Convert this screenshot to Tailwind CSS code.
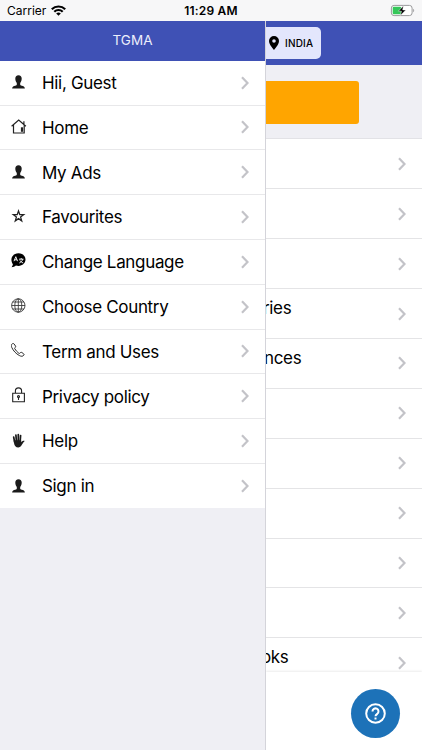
<!DOCTYPE html>
<html lang="en">
<head>
    <meta charset="UTF-8">
    <meta name="viewport" content="width=device-width, initial-scale=1.0">
    <title>TGMA</title>
    <script src="https://cdn.jsdelivr.net/npm/@tailwindcss/browser@4"></script>
</head>
<body class="bg-white text-black font-['Inter',sans-serif] overflow-hidden">

    <!-- Shared icons -->
    <svg class="hidden">
        <symbol id="chevron" viewBox="0 0 8 14">
            <path d="M1 1.300 6.500 7 1 12.700" fill="none" stroke="#c3c3c8" stroke-width="2.200"/>
        </symbol>
        <symbol id="person" viewBox="0 0 14 14">
            <path d="M7.500.2C5.400.2 4.300 1.500 4.300 3.600c0 1.900.6 3.400 1.500 4.300v1.700c0 .6-.5.900-1.600 1.200-1.600.4-2.800.9-3.100 2.800h12.800c-.3-1.900-1.500-2.400-3.100-2.800-1.100-.3-1.600-.6-1.600-1.200V7.900c.9-.9 1.500-2.400 1.500-4.300C10.700 1.500 9.600.2 7.500.2z" fill="#1b1b1b"/>
        </symbol>
    </svg>

    <div class="w-[422px] h-[750px] flex flex-col overflow-hidden">

        <!-- Status bar -->
        <div class="h-[21px] shrink-0 bg-[#f7f7f8] grid grid-cols-3 items-center pl-[7px] pr-[7px]">
            <div class="flex items-center gap-[5px]">
                <span class="text-[12px] leading-[21px]">Carrier</span>
                <svg class="w-[15px] h-[11px]" viewBox="0 0 15 11" fill="none" stroke="#000" stroke-width="2.200">
                    <path d="M.8 4.200a9.600 9.600 0 0 1 13.400 0"/>
                    <path d="M3.300 6.700a6 6 0 0 1 8.400 0"/>
                    <path d="M7.500 10.800 5.200 8.500a3.300 3.300 0 0 1 4.600 0z" fill="#000" stroke="none"/>
                </svg>
            </div>
            <span class="pt-px text-[12px] leading-[20px] font-semibold text-center tracking-[0.2px] whitespace-nowrap">11:29 AM</span>
            <svg class="w-[25px] h-[13px] justify-self-end" viewBox="0 0 25 13">
                <rect x="1.400" y="1.400" width="20.700" height="10.200" rx="2.700" fill="#fff" stroke="#9a9a9c"/>
                <rect x="2.700" y="2.700" width="8.500" height="7.600" rx="1.200" fill="#34c759"/>
                <path d="M23.200 4.800c1.300.6 1.300 2.800 0 3.400z" fill="#9a9a9c"/>
                <path d="M13.400 1.800 8.400 7.200h3l-1 4.300 5.400-5.600h-3.100z" fill="#000" stroke="#fff" stroke-width=".5"/>
            </svg>
        </div>

        <div class="flex flex-1 min-h-0">

            <!-- Drawer -->
            <aside class="w-[266px] shrink-0 bg-[#efeff4] border-r border-[#d4d4da]">
                <div class="h-[39.8px] bg-[#3f51b5] text-[#eceefb] text-[13.5px] leading-[39px] text-center">TGMA</div>
                <nav class="bg-white text-[17px] tracking-[-0.33px]">
                    <a class="h-[44.8px] flex items-center pl-[11px] pr-[16px] border-b border-[#e8e8ea]">
                        <svg class="w-[14px] h-[14px] mb-px"><use href="#person"/></svg>
                        <span class="ml-[17px] flex-1 pt-[2px]">Hii, Guest</span>
                        <svg class="w-[8px] h-[14px]"><use href="#chevron"/></svg>
                    </a>
                    <a class="h-[44.8px] flex items-center pl-[11px] pr-[16px] border-b border-[#e8e8ea]">
                        <svg class="w-[16px] h-[15px] mb-[2px]" viewBox="0 0 16 15" fill="none" stroke="#222" stroke-width="1.200">
                            <path d="M.6 7.300 7.700 1l7.200 6.300M2.500 6v8h10.700V6M12.900 5V2.300"/>
                            <path d="M9.900 8.300h2.200v4.500H9.900z" fill="#222" stroke="none"/>
                        </svg>
                        <span class="ml-[15px] flex-1 pt-[2px]">Home</span>
                        <svg class="w-[8px] h-[14px]"><use href="#chevron"/></svg>
                    </a>
                    <a class="h-[44.8px] flex items-center pl-[11px] pr-[16px] border-b border-[#e8e8ea]">
                        <svg class="w-[14px] h-[14px] mb-px"><use href="#person"/></svg>
                        <span class="ml-[17px] flex-1 pt-[2px]">My Ads</span>
                        <svg class="w-[8px] h-[14px]"><use href="#chevron"/></svg>
                    </a>
                    <a class="h-[44.8px] flex items-center pl-[11px] pr-[16px] border-b border-[#e8e8ea]">
                        <svg class="w-[15px] h-[14px] mb-[2px]" viewBox="0 0 15 14" fill="none" stroke="#222" stroke-width="1.300">
                            <path d="M7.500 2 8.800 5.600l3.900.1-3.100 2.400 1.100 3.700-3.200-2.200-3.200 2.200 1.100-3.700L2.300 5.700l3.900-.1z"/>
                        </svg>
                        <span class="ml-[16px] flex-1 pt-[2px]">Favourites</span>
                        <svg class="w-[8px] h-[14px]"><use href="#chevron"/></svg>
                    </a>
                    <a class="h-[44.8px] flex items-center pl-[11px] pr-[16px] border-b border-[#e8e8ea]">
                        <svg class="w-[15px] h-[15px] mb-[3px]" viewBox="0 0 15 15" fill="none">
                            <path d="M7.500.3c4 0 7 2.700 7 6.300s-3 6.300-7 6.300c-.9 0-1.800-.1-2.600-.4-1.200.9-2.600 1.600-4.300 1.700.7-.9 1.200-1.800 1.300-2.900C.9 10 .4 8.400.4 6.600.4 3 3.500.3 7.500.3z" fill="#000"/>
                            <path d="M3 8.200 4.800 3.700l1.800 4.500M3.600 6.800H6M8 6.200h4.500M10.200 5v1.200M11.700 6.200C11.300 8 10 9.200 8.300 10M8.900 7.400c.7 1.300 1.800 2.100 3.300 2.600" stroke="#fff" stroke-width=".9"/>
                        </svg>
                        <span class="ml-[16px] flex-1 pt-[2px]">Change Language</span>
                        <svg class="w-[8px] h-[14px]"><use href="#chevron"/></svg>
                    </a>
                    <a class="h-[44.8px] flex items-center pl-[11px] pr-[16px] border-b border-[#e8e8ea]">
                        <svg class="w-[15px] h-[15px] mb-[3px]" viewBox="0 0 15 15" fill="none" stroke="#333" stroke-width=".85">
                            <circle cx="7.300" cy="7.500" r="6.700"/>
                            <ellipse cx="7.300" cy="7.500" rx="3.500" ry="6.700"/>
                            <path d="M7.300.8v13.400M.6 7.500H14M1.600 4H13M1.600 11H13"/>
                        </svg>
                        <span class="ml-[16px] flex-1 pt-[2px]">Choose Country</span>
                        <svg class="w-[8px] h-[14px]"><use href="#chevron"/></svg>
                    </a>
                    <a class="h-[44.8px] flex items-center pl-[11px] pr-[16px] border-b border-[#e8e8ea]">
                        <svg class="w-[14px] h-[14px] mb-[2px]" viewBox="0 0 14 14" fill="none" stroke="#222" stroke-width=".95" stroke-linejoin="round">
                            <path d="M1.200.9C.2 1.500 0 2.800.7 4.300c1.700 3.700 4.200 6.300 7.600 8.200 1.800 1 3.500 1.100 4.500-.3.5-.6.300-1.100-.3-1.500l-1.700-1.200c-.5-.4-1-.3-1.400.1l-.6.7c-.3.200-.6.200-.9 0C6.200 9.100 4.800 7.500 3.700 5.600c-.2-.4-.1-.7.2-.9l.5-.4c.4-.3.4-.8.1-1.300L3 .9C2.500.3 1.800.4 1.200.9z"/>
                        </svg>
                        <span class="ml-[17px] flex-1 pt-[2px]">Term and Uses</span>
                        <svg class="w-[8px] h-[14px]"><use href="#chevron"/></svg>
                    </a>
                    <a class="h-[44.8px] flex items-center pl-[11px] pr-[16px] border-b border-[#e8e8ea]">
                        <svg class="w-[15px] h-[16px] mb-[2px]" viewBox="0 0 15 16" fill="none" stroke="#222" stroke-width="1.100">
                            <path d="M1.700 6.200h11.700v8.500H1.700zM4.400 6.200V4a3.100 3.100 0 0 1 6.200 0v2.200"/>
                            <path d="M7.500 10.200v2.800"/>
                            <circle cx="7.500" cy="9.600" r="1"/>
                        </svg>
                        <span class="ml-[16px] flex-1 pt-[2px]">Privacy policy</span>
                        <svg class="w-[8px] h-[14px]"><use href="#chevron"/></svg>
                    </a>
                    <a class="h-[44.8px] flex items-center pl-[11px] pr-[16px] border-b border-[#e8e8ea]">
                        <svg class="w-[15px] h-[15px] mb-[2px]" viewBox="0 0 15 15" fill="none" stroke="#1b1b1b" stroke-width="1.700" stroke-linecap="round">
                            <path d="M2.700 4.200 3.600 9M4.900 2.100 5.400 8M7.300 1.500V8M9.600 2.500 9.200 8"/>
                            <path d="M2.700 7.200h7.400l.3 2c.9-1.100 1.800-1.600 3-1.400.3.200.2.500-.1.800-1.500 1.300-2.100 3.100-3.200 4.400-.7.900-1.700 1.400-2.800 1.400-2.500 0-3.900-1.500-4.200-3.900z" fill="#1b1b1b" stroke="none"/>
                        </svg>
                        <span class="ml-[16px] flex-1 pt-[2px]">Help</span>
                        <svg class="w-[8px] h-[14px]"><use href="#chevron"/></svg>
                    </a>
                    <a class="h-[44.5px] flex items-center pl-[11px] pr-[16px]">
                        <svg class="w-[14px] h-[14px] mb-px"><use href="#person"/></svg>
                        <span class="ml-[17px] flex-1 pt-[2px]">Sign in</span>
                        <svg class="w-[8px] h-[14px]"><use href="#chevron"/></svg>
                    </a>
                </nav>
            </aside>

            <!-- Page pushed aside by the drawer -->
            <main class="flex-1 min-w-0 flex flex-col overflow-hidden">
                <header class="h-[44px] shrink-0 bg-[#3f51b5] pt-[6px]">
                    <button class="w-[55px] h-[32px] flex items-center gap-[6px] pl-[3px] rounded-r-[5px] bg-[#e3e6fc] text-[10px] font-medium tracking-[0.2px]">
                        <svg class="w-[10px] h-[14px] shrink-0" viewBox="0 0 10 14">
                            <path d="M5 0a5 5 0 0 0-5 5c0 3.500 5 9 5 9s5-5.500 5-9a5 5 0 0 0-5-5zm0 3.200a1.800 1.800 0 1 1 0 3.600 1.800 1.800 0 0 1 0-3.600z"/>
                        </svg>
                        INDIA
                    </button>
                </header>
                <div class="h-[74.4px] shrink-0 bg-[#efeff4] pt-[16px] border-b border-[#e2e2e6]">
                    <div class="w-[93px] h-[43px] rounded-r-[3px] bg-[#ffa500]"></div>
                </div>
                <div class="h-[532.6px] shrink-0 overflow-hidden text-[17px] tracking-[-0.33px]">
                    <div class="h-[49.9px] flex items-center justify-end pr-[16px] border-b border-[#e4e4e6]"><svg class="w-[8px] h-[14px]"><use href="#chevron"/></svg></div>
                    <div class="h-[49.9px] flex items-center justify-end pr-[16px] border-b border-[#e4e4e6]"><svg class="w-[8px] h-[14px]"><use href="#chevron"/></svg></div>
                    <div class="h-[49.9px] flex items-center justify-end pr-[16px] border-b border-[#e4e4e6]"><svg class="w-[8px] h-[14px]"><use href="#chevron"/></svg></div>
                    <div class="h-[49.9px] flex items-center justify-between pr-[16px] border-b border-[#e4e4e6]">
                        <span class="-ml-[3px] mb-[9px]">ries</span>
                        <svg class="w-[8px] h-[14px]"><use href="#chevron"/></svg>
                    </div>
                    <div class="h-[49.9px] flex items-center justify-between pr-[16px] border-b border-[#e4e4e6]">
                        <span class="-ml-[2px] mb-[9px]">nces</span>
                        <svg class="w-[8px] h-[14px]"><use href="#chevron"/></svg>
                    </div>
                    <div class="h-[49.9px] flex items-center justify-end pr-[16px] border-b border-[#e4e4e6]"><svg class="w-[8px] h-[14px]"><use href="#chevron"/></svg></div>
                    <div class="h-[49.9px] flex items-center justify-end pr-[16px] border-b border-[#e4e4e6]"><svg class="w-[8px] h-[14px]"><use href="#chevron"/></svg></div>
                    <div class="h-[49.9px] flex items-center justify-end pr-[16px] border-b border-[#e4e4e6]"><svg class="w-[8px] h-[14px]"><use href="#chevron"/></svg></div>
                    <div class="h-[49.9px] flex items-center justify-end pr-[16px] border-b border-[#e4e4e6]"><svg class="w-[8px] h-[14px]"><use href="#chevron"/></svg></div>
                    <div class="h-[49.9px] flex items-center justify-end pr-[16px] border-b border-[#e4e4e6]"><svg class="w-[8px] h-[14px]"><use href="#chevron"/></svg></div>
                    <div class="h-[49.9px] flex items-center justify-between pr-[16px]">
                        <span class="-ml-[5px] mb-[10px]">oks</span>
                        <svg class="w-[8px] h-[14px]"><use href="#chevron"/></svg>
                    </div>
                </div>
                <!-- Footer with help button -->
                <footer class="flex-1 bg-white shadow-[0_-1px_2px_rgba(0,0,0,0.08)] flex justify-end items-start pt-[17px] pr-[22px]">
                    <button class="w-[49px] h-[49px] rounded-full bg-[#1d72b8] flex items-center justify-center">
                        <svg class="w-[21px] h-[21px]" viewBox="0 0 21 21" fill="none" stroke="#fff" stroke-width="2">
                            <circle cx="10.500" cy="10.500" r="9.300"/>
                            <path d="M7.500 8.500a3 3 0 1 1 4.800 2.300c-1.100.8-1.800 1.300-1.800 2.500"/>
                            <path d="M10.500 14.500v2"/>
                        </svg>
                    </button>
                </footer>
            </main>
        </div>
    </div>
</body>
</html>
